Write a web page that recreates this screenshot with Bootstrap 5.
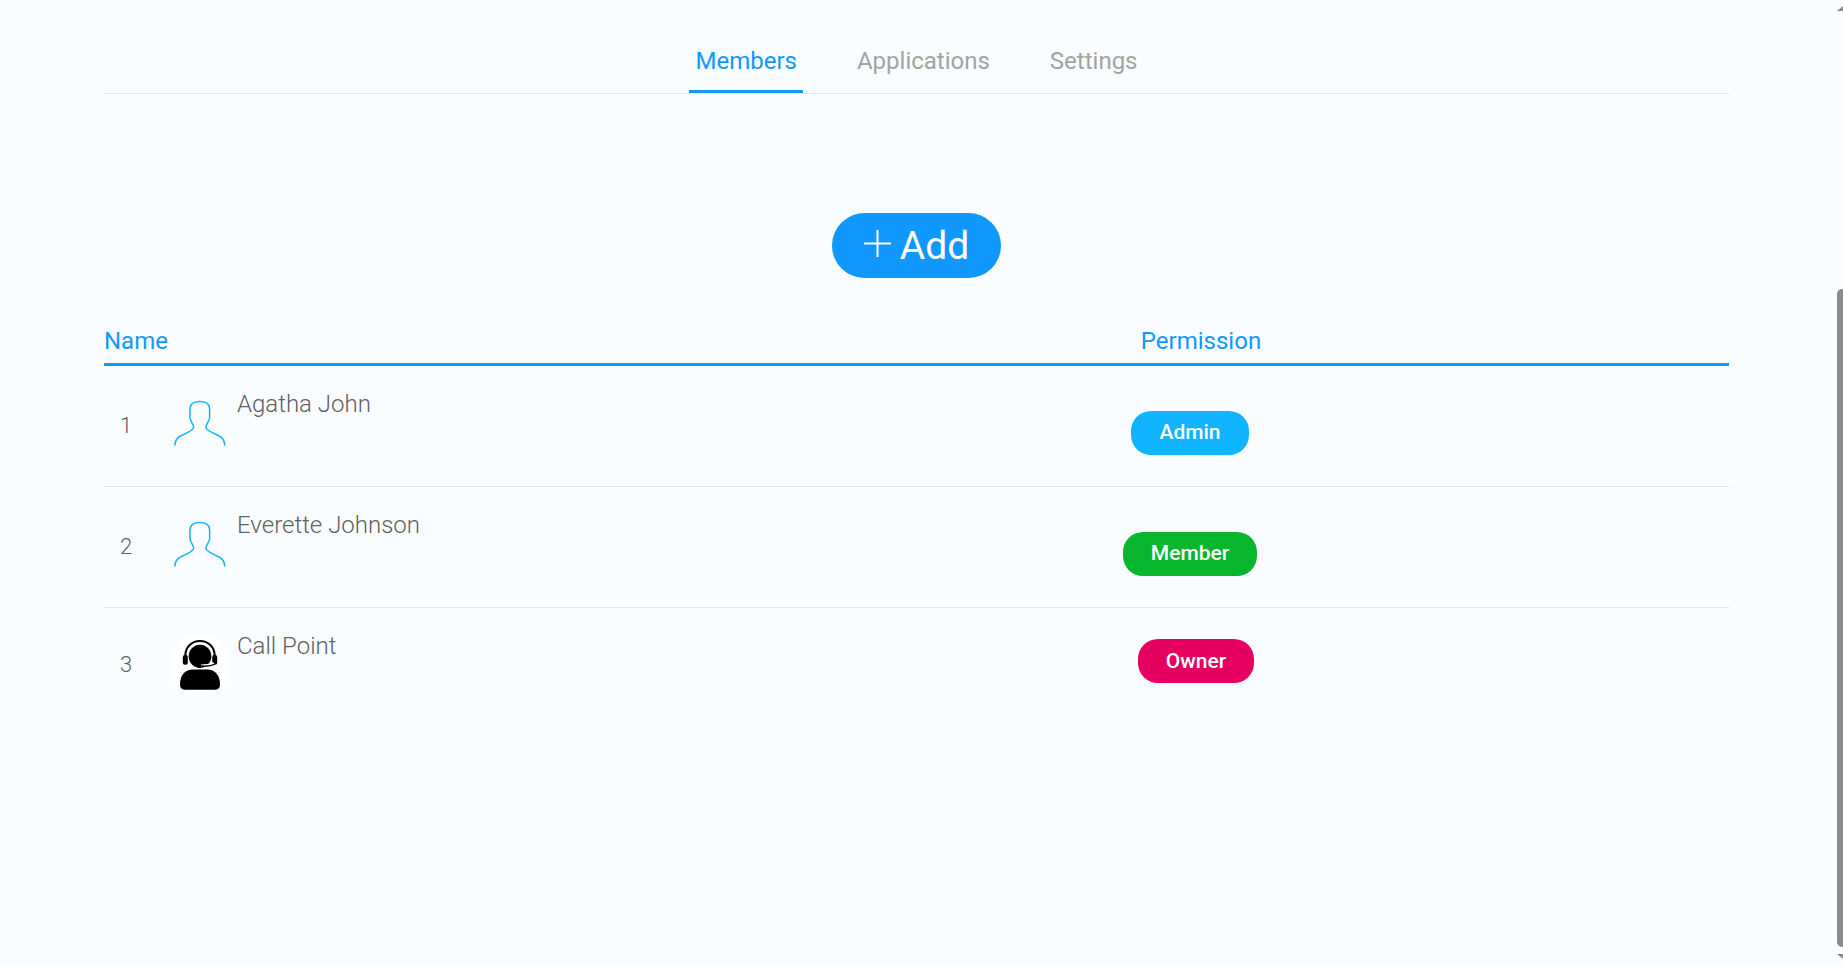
<!DOCTYPE html>
<html lang="en">
<head>
<meta charset="utf-8">
<meta name="viewport" content="width=device-width, initial-scale=1">
<title>Members</title>
<link href="https://cdn.jsdelivr.net/npm/bootstrap@5.3.0/dist/css/bootstrap.min.css" rel="stylesheet">
<style>
  :root { --brand: #1098ff; --sky: #11b4ff; --rule: #e2e6ea; --page: #fafdff; }
  body { background: var(--page); color: #5f5f5f; font-family: Roboto, "Liberation Sans", sans-serif; font-size: 24px; line-height: 28px; }
  main { padding: 40px 108px 40px 104px; }

  /* section tabs */
  .tabs { gap: 48px; border-bottom: 1px solid var(--rule); }
  .tabs .nav-link { padding: 7px 6px 15px; color: #a3a3a3; border-bottom: 3px solid transparent; }
  .tabs .nav-link.active { color: var(--brand); border-color: var(--brand); }

  .btn-add { --bs-btn-color: #fff; --bs-btn-bg: var(--brand); --bs-btn-hover-color: #fff; --bs-btn-hover-bg: #0a86e6; --bs-btn-border-width: 0;
    margin: 119px 0 47px; padding: 9px 32px 8px; gap: 9px; font-size: 39px; line-height: 48px; }
  .btn-add svg { margin-bottom: 5px; }

  /* member list */
  .members { --bs-table-bg: transparent; --bs-table-color: #5f5f5f; table-layout: fixed; font-weight: 300; }
  .members > thead th, .members > thead td { padding: 2px 0 8px; color: var(--brand); font-weight: 400; border-bottom: 3px solid var(--brand); }
  .members > tbody td { padding: 24px 0; border-bottom: 1px solid var(--rule); }
  .members > tbody tr:last-child td { border-bottom: 0; }
  .col-no { width: 66px; }
  .col-perm { width: 156px; }
  .col-rest { width: 28%; }
  .members .no-cell { padding-right: 22px; font-size: 22px; }
  .members .perm-head { padding-left: 10px; }
  .members .perm-cell { padding: 45px 12px 31px 0; }
  .members .owner-cell { padding: 31px 0; }
  .avatar { width: 60px; height: 60px; margin: 3px 7px 3px 0; }
  .role { --bs-btn-color: #fff; --bs-btn-hover-color: #fff; --bs-btn-border-width: 0; display: inline-block; vertical-align: top; padding: 9px 28px 11px;
    border-radius: 20px; color: #fff; font-size: 21px; font-weight: 500; line-height: 24px; }
  .role-admin { --bs-btn-bg: var(--sky); --bs-btn-hover-bg: #0aa0e6; }
  .role-member { --bs-btn-bg: #08b62e; --bs-btn-hover-bg: #079a27; }
  .role-owner { padding: 10px 28px; background: #e60061; }

  /* scroll indicator */
  .scroll-rail { width: 6px; height: 100vh; top: 0; padding: 6px 0 7px; background: #fcfcfc; }
  .scroll-rail .thumb { flex: 658 0 0; margin-bottom: 7px; background: #8b8b8b; border-radius: 5px 0 0 5px; }
  .scroll-rail .above { flex: 278 0 0; }
</style>
</head>
<body>
<div class="d-flex min-vh-100">
  <main class="flex-grow-1">
    <nav class="nav tabs justify-content-center" aria-label="Sections">
      <a class="nav-link active" aria-current="page" href="#members">Members</a>
      <a class="nav-link" href="#applications">Applications</a>
      <a class="nav-link" href="#settings">Settings</a>
    </nav>

    <div class="text-center">
      <button type="button" class="btn btn-add rounded-pill d-inline-flex align-items-center">
        <svg width="27" height="27" viewBox="0 0 27 27" fill="none" stroke="#fff" stroke-width="2" aria-hidden="true"><path d="M0 13.5h27M13.5 0v27"/></svg>
        Add
      </button>
    </div>

    <table class="table members mb-0" id="members">
      <colgroup><col class="col-no"><col><col class="col-perm"><col class="col-rest"></colgroup>
      <thead>
        <tr>
          <th scope="col" colspan="2">Name</th>
          <th scope="col" class="perm-head text-center">Permission</th>
          <td></td>
        </tr>
      </thead>
      <tbody>
        <tr>
          <td class="no-cell text-center align-middle">1</td>
          <td><div class="d-flex align-items-start"><svg class="avatar" viewBox="0 0 60 60" fill="none" stroke="#11b4ff" stroke-width="1.5" aria-hidden="true"><path id="person" d="M4.8 52.5C5 47 8 43.8 12 42.2C16.5 40.3 23.7 37 23.7 34.3C23.7 31 20.3 28.8 20.1 25C19.6 24.3 19.9 23.5 20 22.5C20 20 19.6 18 20.2 14.5C20.8 10.2 24 8.4 29.8 8.4S38.8 10.2 39.4 14.5C40 18 39.6 20 39.6 22.5C39.7 23.5 40 24.3 39.5 25C39.3 28.8 35.9 31 35.9 34.3C35.9 37 43.1 40.3 47.6 42.2C51.6 43.8 54.6 47 54.8 52.5"/></svg><span>Agatha John</span></div></td>
          <td class="perm-cell text-center"><button type="button" class="btn role role-admin">Admin</button></td>
          <td></td>
        </tr>
        <tr>
          <td class="no-cell text-center align-middle">2</td>
          <td><div class="d-flex align-items-start"><svg class="avatar" viewBox="0 0 60 60" fill="none" stroke="#11b4ff" stroke-width="1.5" aria-hidden="true"><use href="#person"/></svg><span>Everette Johnson</span></div></td>
          <td class="perm-cell text-center"><button type="button" class="btn role role-member">Member</button></td>
          <td></td>
        </tr>
        <tr>
          <td class="no-cell text-center align-middle">3</td>
          <td><div class="d-flex align-items-start"><svg class="avatar" viewBox="0 0 60 60" aria-hidden="true"><circle cx="30" cy="30" r="30" fill="#fff"/><path d="M15.3 21C15.3 1 44.7 1 44.7 21" fill="none" stroke="#000" stroke-width="2.2"/><rect x="12.8" y="20" width="5" height="9.8" rx="2"/><rect x="42.2" y="20" width="5" height="9.8" rx="2"/><ellipse cx="30" cy="21.3" rx="11.3" ry="11.6"/><path d="M44 28C42 31 37 30.8 31 31.3" fill="none" stroke="#fff" stroke-width="3.6"/><path d="M45 28.5C44 31 38 31 32 31.4" fill="none" stroke="#000" stroke-width="1.4"/><ellipse cx="32.2" cy="31.4" rx="1.8" ry="1.2"/><path d="M10 50C10 39 16 34.6 23 34.6H37C44 34.6 50 39 50 50C50 53 48 54.8 45 54.8H15C12 54.8 10 53 10 50Z"/></svg><span>Call Point</span></div></td>
          <td class="owner-cell text-center"><span class="role role-owner">Owner</span></td>
          <td></td>
        </tr>
      </tbody>
    </table>
  </main>

  <div class="scroll-rail position-sticky d-flex flex-column flex-shrink-0" aria-hidden="true">
    <svg width="6" height="5" viewBox="0 0 6 5" fill="#8b8b8b"><path d="M0 5L6 0V5Z"/></svg>
    <div class="above"></div>
    <div class="thumb"></div>
    <svg width="6" height="5" viewBox="0 0 6 5" fill="#8b8b8b"><path d="M0 0H6V5Z"/></svg>
  </div>
</div>
<script src="https://cdn.jsdelivr.net/npm/bootstrap@5.3.0/dist/js/bootstrap.bundle.min.js"></script>
</body>
</html>
